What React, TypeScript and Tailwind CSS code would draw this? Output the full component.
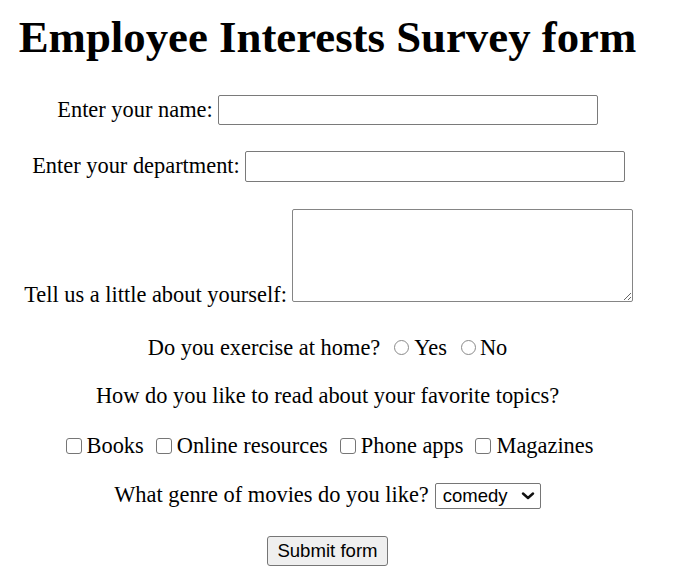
import { useState } from 'react';

const topics = ['Books', 'Online resources', 'Phone apps', 'Magazines'];

export default function App() {
  const [genre, setGenre] = useState('comedy');

  return (
    <div className="w-[655px] bg-white text-black font-['Liberation_Serif','Times_New_Roman',serif] text-[22.4px] leading-[25.8px]">
      <h1 className="mt-[12px] text-center text-[44.8px] leading-[51.5px] font-bold">
        Employee Interests Survey form
      </h1>

      <form className="flex flex-col" onSubmit={(e) => e.preventDefault()}>
        <div className="mt-[31px] flex items-center justify-center gap-[5px]">
          <label htmlFor="name">Enter your name:</label>
          <input
            id="name"
            type="text"
            className="w-[380px] h-[30px] border border-[#7a7a7a] rounded-[2px] bg-white"
          />
        </div>

        <div className="mt-[26px] flex items-center justify-center gap-[5px] pl-[2px]">
          <label htmlFor="dept">Enter your department:</label>
          <input
            id="dept"
            type="text"
            className="w-[380px] h-[31px] border border-[#7a7a7a] rounded-[2px] bg-white"
          />
        </div>

        <div className="mt-[27px] flex items-end justify-center gap-[5px] pl-[2px]">
          <label htmlFor="about" className="mb-[-6px]">Tell us a little about yourself:</label>
          <textarea
            id="about"
            className="w-[341px] h-[93px] border border-[#858585] rounded-[2px] bg-white"
          />
        </div>

        <div className="mt-[33px] flex items-center justify-center">
          <span>Do you exercise at home?</span>
          <input
            type="radio"
            name="exercise"
            className="appearance-none ml-[14px] w-[15px] h-[15px] m-0 rounded-full border border-[#8a8a8a] bg-white"
          />
          <span className="ml-[5px]">Yes</span>
          <input
            type="radio"
            name="exercise"
            className="appearance-none ml-[14px] w-[15px] h-[15px] m-0 rounded-full border border-[#8a8a8a] bg-white"
          />
          <span className="ml-[4px]">No</span>
        </div>

        <p className="mt-[23px] text-center">How do you like to read about your favorite topics?</p>

        <div className="mt-[24px] flex items-center justify-center pl-[4px]">
          {topics.map((t, i) => (
            <label key={t} className={`flex items-center ${i > 0 ? 'ml-[12px]' : ''}`}>
              <input
                type="checkbox"
                className="appearance-none w-[16px] h-[16px] m-0 rounded-[3px] border border-[#767676] bg-white"
              />
              <span className="ml-[5px]">{t}</span>
            </label>
          ))}
        </div>

        <div className="mt-[23px] flex items-center justify-center gap-[6px]">
          <label htmlFor="genre">What genre of movies do you like?</label>
          <div className="relative">
            <select
              id="genre"
              value={genre}
              onChange={(e) => setGenre(e.target.value)}
              className="appearance-none w-[106px] h-[26px] pl-[7px] border border-[#767676] rounded-[2px] bg-white font-['Liberation_Sans',Arial,sans-serif] text-[18.5px] leading-[24px]"
            >
              <option value="comedy">comedy</option>
              <option value="drama">drama</option>
              <option value="action">action</option>
              <option value="horror">horror</option>
            </select>
            <svg
              className="pointer-events-none absolute right-[6px] top-[10px]"
              width="14"
              height="8"
              viewBox="0 0 14 8"
              fill="none"
            >
              <path d="M2 1.5 L7 6 L12 1.5" stroke="#111" strokeWidth="2.4" strokeLinecap="round" strokeLinejoin="round" />
            </svg>
          </div>
        </div>

        <div className="mt-[27px] flex justify-center">
          <button
            type="submit"
            className="w-[121px] h-[30px] border border-[#767676] rounded-[3px] bg-[#efefef] font-['Liberation_Sans',Arial,sans-serif] text-[18.6px] leading-[24px]"
          >
            Submit form
          </button>
        </div>
      </form>
    </div>
  );
}
